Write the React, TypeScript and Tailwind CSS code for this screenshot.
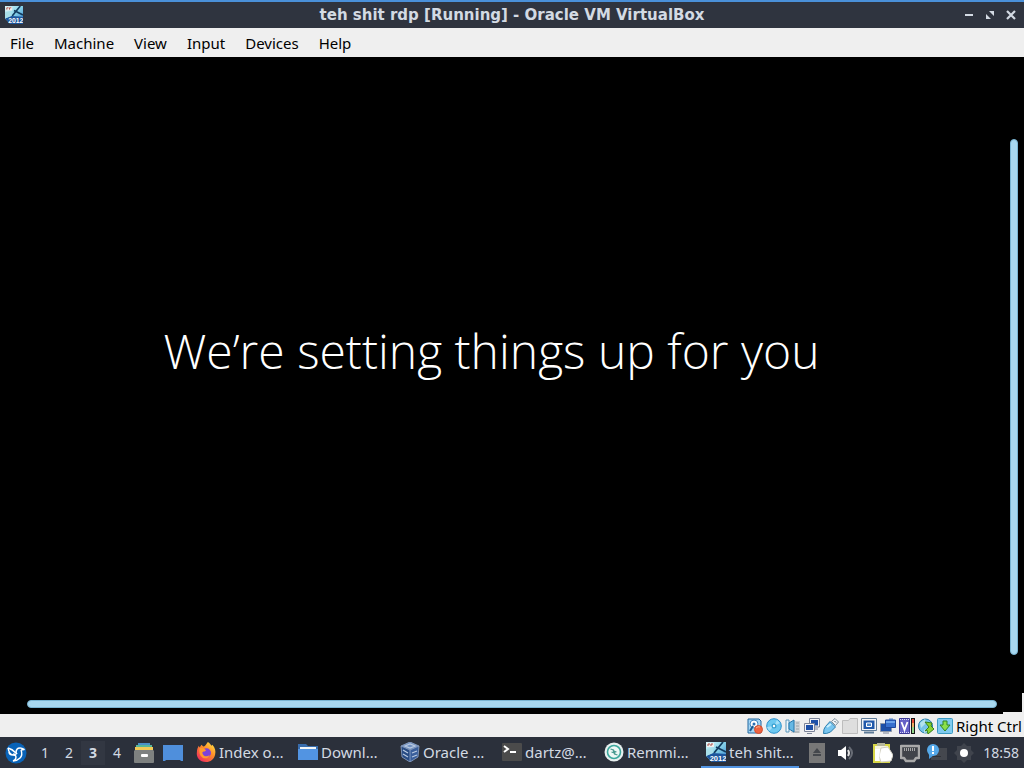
import React from "react";

type IconProps = { className?: string };

function ServerIcon({ className }: IconProps) {
  return (
    <svg viewBox="0 0 20 20" className={className} aria-hidden="true">
      <defs>
        <linearGradient id="server-bg" x1="0" y1="0" x2="1" y2="1">
          <stop offset="0" stopColor="#dff6f8" />
          <stop offset=".45" stopColor="#8ed7ea" />
          <stop offset="1" stopColor="#2a7fd0" />
        </linearGradient>
      </defs>
      <path d="M0 0h20v20H6L0 14z" fill="url(#server-bg)" />
      <path d="M8 11 17 0M10 5l10 5" stroke="#123c60" strokeWidth="1.8" />
      <path d="m0 14 7-3 13 1v8H6z" fill="#1d559c" />
      <path d="m0 7 7-1v5l-7 3z" fill="#a9dfe9" />
      <path d="M1 1h7v4H1z" fill="#f2f0ee" />
      <path d="M2 4V2h2M5 4V2h2" stroke="#a8504c" fill="none" />
      <text x="12" y="18.5" textAnchor="middle" fontSize="7.5" fontWeight="700" fill="#fff" fontFamily="Liberation Sans, sans-serif">2012</text>
    </svg>
  );
}

function LauncherIcon() {
  return (
    <svg viewBox="0 0 22 22" className="size-[22px]" aria-hidden="true">
      <circle cx="11" cy="11" r="10.5" fill="#0963b8" />
      <path d="M3 6q4 1 8 5" fill="none" stroke="#fff" strokeWidth="1.6" />
      <path d="M11 11q0-5 4-5 2 0 4 1.500l-3 .5" fill="none" stroke="#fff" strokeWidth="1.6" strokeLinejoin="round" />
      <path d="M16 8q2 5-1 8-3 3-7 3 3-1 3-4 0-2-3-2-4-1-5-7M4 10q0 3 4 3" fill="none" stroke="#fff" strokeWidth="1.4" />
      <path d="M8 12q3 1 4-1" fill="none" stroke="#fff" strokeWidth="1.6" />
    </svg>
  );
}

function CabinetIcon() {
  return (
    <svg viewBox="0 0 20 20" className="size-5" aria-hidden="true">
      <path d="M4 0h12v4H4z" fill="#4a90c8" />
      <path d="M2 2h16v3H2z" fill="#57b69b" />
      <path d="M1 4h18v4H1z" fill="#f1c957" />
      <path d="M1 7h18l1 1v11a1 1 0 0 1-1 1H1a1 1 0 0 1-1-1V8z" fill="#7e8180" />
      <rect x="7" y="11" width="7" height="3" rx="1" fill="#fff" />
    </svg>
  );
}

function DesktopIcon() {
  return (
    <svg viewBox="0 0 20 18" className="h-[18px] w-5" aria-hidden="true">
      <path d="M0 1h20v16h-2l-1-1H3l-1 1H0z" fill="#4f8fdc" />
    </svg>
  );
}

function FirefoxIcon({ className }: IconProps) {
  return (
    <svg viewBox="0 0 22 22" className={className} aria-hidden="true">
      <defs>
        <linearGradient id="fox" x1="1" y1="0" x2=".2" y2="1">
          <stop offset="0" stopColor="#fff04a" />
          <stop offset=".45" stopColor="#ff9128" />
          <stop offset="1" stopColor="#ef2a5e" />
        </linearGradient>
      </defs>
      <path d="M13 0c2 1 3 3 4 4l1-1c3 3 4 7 3 11-1 5-5 8-10 8C4 22 0 17 1 11c0-3 1-5 2-7l1 2 2-3 2 2c2 0 3-2 5-5z" fill="url(#fox)" />
      <circle cx="11.5" cy="12" r="5" fill="#7d42d9" />
      <path d="M4 7c3-1 5 0 7 2-1 2-4 1-4 3 1 4 5 5 8 2-1 4-5 5-8 3-3-2-4-6-3-10z" fill="#ff9a2c" />
    </svg>
  );
}

function FolderIcon({ className }: IconProps) {
  return (
    <svg viewBox="0 0 20 20" className={className} aria-hidden="true">
      <path d="M0 2h8l2 2h10v14H0z" fill="#386cac" />
      <path d="M2 5h16v4H2z" fill="#f2f5f7" />
      <path d="M0 7h20v11H0z" fill="#5294e2" />
    </svg>
  );
}

function CubeIcon({ className }: IconProps) {
  return (
    <svg viewBox="0 0 20 20" className={className} aria-hidden="true">
      <path d="m1 4 9-4 9 4-9 4z" fill="#6f8fc0" />
      <path d="m1 4 9 4v12l-8-5z" fill="#284b83" />
      <path d="m19 4-9 4v12l8-5z" fill="#3a5f9c" />
      <path d="m1 4 9 4 9-4M10 8v12M1 4l1 11 8 5 8-5 1-11-9-4z" fill="none" stroke="#8fa5c8" strokeWidth=".8" />
      <path d="m5 4 5-2 5 2-5 2zM12 11l5-2M12 15l5-2M3 8l5 3M3 12l5 3" fill="none" stroke="#b9c9e0" strokeWidth="1.3" />
    </svg>
  );
}

function TerminalIcon({ className }: IconProps) {
  return (
    <svg viewBox="0 0 20 20" className={className} aria-hidden="true">
      <rect y="1" width="20" height="18" rx="1" fill="#4b4b4b" />
      <path d="m2 4 4 3-4 3M8 10h6" fill="none" stroke="#fff" strokeWidth="2" />
    </svg>
  );
}

function RemminaIcon({ className }: IconProps) {
  return (
    <svg viewBox="0 0 20 20" className={className} aria-hidden="true">
      <circle cx="10" cy="10" r="9.5" fill="#e7efef" />
      <circle cx="10" cy="10" r="6.5" fill="#eef7f5" stroke="#3ba79c" strokeWidth="1.6" />
      <path d="m6.500 7 3 1 1 3-3-1M13.500 13l-3-1-1-3 3 1" fill="none" stroke="#4a9a90" strokeWidth="1.300" />
    </svg>
  );
}

const deviceIcons: { name: string; art: React.ReactNode }[] = [
  {
    name: "Hard disks",
    art: (
      <>
        <path d="M1 1h11l2 2v12H1z" fill="#a5d6f5" stroke="#20669f" />
        <circle cx="7" cy="6" r="4" fill="#fff" stroke="#4186c2" />
        <circle cx="7" cy="6" r="1.5" fill="#276cb3" />
        <path d="M3 13 6 8" stroke="#175990" strokeWidth="2" />
        <circle cx="11.500" cy="11.500" r="4" fill="#ee6240" stroke="#d14f30" />
        <path d="M9 10q2-2 4-1" stroke="#ffad87" fill="none" />
      </>
    ),
  },
  {
    name: "Optical drives",
    art: (
      <>
        <circle cx="8" cy="8" r="7.300" fill="#6cc8f0" stroke="#2a90cc" />
        <path d="m8 8 3-6 3 3zM8 8l-5 5-2-4z" fill="#a5e0f8" />
        <circle cx="8" cy="8" r="2.500" fill="#399fce" />
        <circle cx="8" cy="8" r="1.200" fill="#fff" />
      </>
    ),
  },
  {
    name: "Audio",
    art: (
      <>
        <path d="M8 3h7v12H6v-2h3z" fill="#d1d5d8" />
        <path d="M11 5h3M11 8h3M11 11h3M8 14h6" stroke="#9ba3a8" />
        <path d="M1 2h3v12H1z" fill="#eef6fb" stroke="#5997bd" />
        <path d="m4 5 5-3v12l-5-3z" fill="#66b8e4" stroke="#2779ad" />
      </>
    ),
  },
  {
    name: "Network",
    art: (
      <>
        <path d="M5.500.5h10v8.500h-10z" fill="#f4f4f8" stroke="#7c8498" />
        <path d="M7 2h7v5.500H7z" fill="#1c4fa8" />
        <path d="M8 11h6" stroke="#7c8498" />
        <path d="M.5 5.500h10v8H.5z" fill="#f4f4f8" stroke="#7c8498" />
        <path d="M2 7h7v5H2z" fill="#1c4fa8" />
        <path d="M3 15.500h5" stroke="#7c8498" />
      </>
    ),
  },
  {
    name: "USB",
    art: (
      <>
        <path d="m9 3 3-2.500 3.500 3.500-3 3.500-4-4z" fill="#f3f6f8" stroke="#7c8d99" />
        <path d="m7 3.500 5.500 5.500-5 5q-4 2-7 1.500 0-5 2-7z" fill="#79c6f0" stroke="#2b7dad" />
        <path d="m4 9 4-3" stroke="#c8effd" strokeWidth="2" />
        <path d="m11.500 3 1.500 1.500" stroke="#425d70" />
      </>
    ),
  },
  {
    name: "Shared folders",
    art: <path d="M.5 2.500h6l1.500-2h7.500v15H.5z" fill="#dedede" stroke="#bdbdbd" />,
  },
  {
    name: "Display",
    art: (
      <>
        <path d="M.5.5h15v12H.5z" fill="#f3f5f7" stroke="#5e7b98" />
        <path d="M3 14.500h10" stroke="#5e7b98" strokeWidth="2" />
        <path d="M2.500 2.500h11v8.500h-11z" fill="#1f58aa" />
        <path d="M5.500 5h5v3.500h-5z" fill="#4b83c6" stroke="#fff" />
      </>
    ),
  },
  {
    name: "Recording",
    art: (
      <>
        <path d="M.5 5.500h11v8H.5z" fill="#1c4fa8" stroke="#8c97a8" />
        <path d="M3 15h6" stroke="#7c8498" />
        <path d="M5.500 2h10v7.500h-10z" fill="#3770ce" stroke="#1d479b" />
        <path d="M9 .5h4V2H9z" fill="#507fc6" />
        <path d="M6 4h9" stroke="#6ba3ea" strokeWidth="2" />
      </>
    ),
  },
  {
    name: "Features",
    art: (
      <>
        <path d="M.5.5h10v15H.5z" fill="#6460c6" stroke="#3d3a96" />
        <path d="m2.500 4 3 8 3-8" stroke="#fff" strokeWidth="1.800" fill="none" />
        <path d="M1 1.500h9M1 14.500h9" stroke="#d9d8fa" strokeDasharray="1 1" />
        <path d="M12 0h4v16h-4z" fill="#151515" />
        <path d="M13 1h2v5h-2z" fill="#e54b38" />
        <path d="M13 5h2v5h-2z" fill="#edae65" />
        <path d="M13 9h2v6h-2z" fill="#92d68a" />
      </>
    ),
  },
  {
    name: "Mouse integration",
    art: (
      <>
        <circle cx="7.500" cy="8" r="7" fill="#76c3ea" stroke="#287fab" />
        <path d="m2 5 5-4 1 4-5 5zM6 11l4 3-4 1z" fill="#b3e2ee" />
        <path d="m7 4 7 1-1 3 3 3-6 5-1-4-2 1 4-4z" fill="#87d332" stroke="#38801c" />
      </>
    ),
  },
  {
    name: "Keyboard capture",
    art: (
      <>
        <rect x=".5" y=".5" width="15" height="15" rx="1" fill="#80cbf0" stroke="#3c9bc4" />
        <path d="M6 3h4v4h3l-5 6-5-6h3z" fill="#8be04a" stroke="#2f8726" />
      </>
    ),
  },
];

const menus = ["File", "Machine", "View", "Input", "Devices", "Help"];

const tasks = [
  { label: "Index o…", Icon: FirefoxIcon },
  { label: "Downl…", Icon: FolderIcon },
  { label: "Oracle …", Icon: CubeIcon },
  { label: "dartz@…", Icon: TerminalIcon },
  { label: "Remmi…", Icon: RemminaIcon },
  { label: "teh shit…", Icon: ServerIcon, active: true },
];

function TitleBar() {
  return (
    <header className="grid h-7 shrink-0 grid-cols-[80px_1fr_80px] items-center border-t-2 border-[#4a90d9] bg-[#2f343f] text-[#d3dae3]">
      <ServerIcon className="ml-[5px] size-[18px]" />
      <h1 className="truncate text-center font-['DejaVu_Sans',sans-serif] text-[15px] leading-5 font-bold">
        teh shit rdp [Running] - Oracle VM VirtualBox
      </h1>
      <div className="flex justify-end gap-[5px] pr-[5px]">
        <button aria-label="Minimize" className="flex size-4 items-center justify-center">
          <svg viewBox="0 0 16 16" className="size-4"><path d="M4 7h8v2H4z" fill="currentColor" /></svg>
        </button>
        <button aria-label="Maximize" className="flex size-4 items-center justify-center">
          <svg viewBox="0 0 16 16" className="size-4"><path d="M7 4h5v5zM4 7v5h5z" fill="currentColor" /></svg>
        </button>
        <button aria-label="Close" className="flex size-4 items-center justify-center">
          <svg viewBox="0 0 16 16" className="size-4"><path d="m4 4 8 8M12 4l-8 8" stroke="currentColor" strokeWidth="2.2" /></svg>
        </button>
      </div>
    </header>
  );
}

function GuestView() {
  return (
    <main id="guest" className="flex min-h-0 flex-1 flex-col bg-black">
      <div className="flex min-h-0 flex-1">
        <div className="flex flex-1 items-center justify-center pr-5 pb-12">
          <p className="font-['Open_Sans',sans-serif] text-5xl font-light whitespace-nowrap text-white">
            We’re setting things up for you
          </p>
        </div>
        <div className="flex w-[21px] flex-col pt-[82px] pr-[6px] pb-[38px] pl-[7px]">
          <div role="scrollbar" aria-label="Vertical scroll" aria-orientation="vertical" aria-controls="guest" aria-valuenow={100} className="flex-1 rounded-full border border-[#79b4d2] bg-[#a8d8f0]" />
        </div>
      </div>
      <div className="flex h-[21px] shrink-0">
        <div className="flex flex-1 items-start pt-[7px] pr-[6px] pl-[27px]">
          <div role="scrollbar" aria-label="Horizontal scroll" aria-orientation="horizontal" aria-controls="guest" aria-valuenow={100} className="h-2 flex-1 rounded-full border border-[#79b4d2] bg-[#a8d8f0]" />
        </div>
        <div className="w-[21px] border-r-2 border-b-2 border-[#efefef]" />
      </div>
    </main>
  );
}

function StatusBar() {
  return (
    <div className="flex h-[23px] shrink-0 items-center justify-end gap-[3px] bg-[#efefef] pr-[2px]">
      {deviceIcons.map(({ name, art }) => (
        <button key={name} aria-label={name} className="size-4">
          <svg viewBox="0 0 16 16" className="size-4">{art}</svg>
        </button>
      ))}
      <span className="text-[15px] leading-5 text-black">Right Ctrl</span>
    </div>
  );
}

function Tray() {
  return (
    <div className="flex shrink-0 items-center">
      <button aria-label="Removable media" className="mr-3">
        <svg viewBox="0 0 16 20" className="h-5 w-4"><path d="M0 0h16v20H0z" fill="#777" /><path d="m8 5 4 5H4zM4 11h8v2H4z" fill="#44474c" /></svg>
      </button>
      <button aria-label="Volume" className="mr-[18px]">
        <svg viewBox="0 0 18 18" className="size-[18px]">
          <path d="M1 6h3l5-4v14l-5-4H1z" fill="#fff" />
          <path d="M11 6q2 3 0 6" fill="none" stroke="#e2e2e2" strokeWidth="2" />
          <path d="M12 3q6 6 0 12" fill="none" stroke="#686c75" strokeWidth="2" />
        </svg>
      </button>
      <button aria-label="Clipboard" className="mr-[7px]">
        <svg viewBox="0 0 20 20" className="size-5">
          <path d="M0 1h17v19H0z" fill="#d8d646" /><path d="M2 3h13v15H2z" fill="#f7f5df" />
          <path d="M4 0h8v3H4z" fill="#b6b69c" />
          <path d="m8 5 7-1 5 8-2 6-10 1-2-6z" fill="#fff" stroke="#d2d0c4" />
          <path d="M2 6h5l-1 12H2z" fill="#fff" />
        </svg>
      </button>
      <button aria-label="Network connection" className="mr-[7px]">
        <svg viewBox="0 0 20 20" className="size-5">
          <path d="M1 3h18v12h-3l-2 3H6l-2-3H1z" fill="#41444a" stroke="#a9a9a9" strokeWidth="2.400" strokeLinejoin="round" />
          <path d="M4.500 5v3M6.500 5v3M8.500 5v3M10.500 5v3M12.500 5v3M14.500 5v3" stroke="#a7a7a7" />
        </svg>
      </button>
      <button aria-label="Notifications" className="mr-[7px]">
        <svg viewBox="0 0 20 20" className="size-5">
          <path d="M4 5h16v12H4z" fill="#44474e" />
          <path d="M5 13h9v1H5z" fill="#303238" />
          <path d="m2 10 0 6 5-4z" fill="#4a9de0" />
          <circle cx="6" cy="7" r="6" fill="#56a9e9" /><path d="M6 3v5M6 9v2" stroke="#fff" strokeWidth="2" />
        </svg>
      </button>
      <button aria-label="Brightness" className="mr-[9px]">
        <svg viewBox="0 0 20 20" className="size-5">
          <path d="m10 0 3 3h4v4l3 3-3 3v4h-4l-3 3-3-3H3v-4l-3-3 3-3V3h4z" fill="#40444d" />
          <circle cx="10" cy="10" r="4" fill="#fff" />
        </svg>
      </button>
      <time dateTime="18:58" className="text-sm">18:58</time>
    </div>
  );
}

function Taskbar() {
  return (
    <footer className="flex h-[31px] shrink-0 items-center bg-[#2b303b] pr-[5px] pl-[5px] text-[#d3dae3]">
      <button aria-label="Applications" className="mr-[6px] shrink-0"><LauncherIcon /></button>
      <nav aria-label="Workspaces" className="flex shrink-0">
        {[1, 2, 3, 4].map((n) => (
          <button key={n} aria-current={n === 3} className={n === 3 ? "h-6 w-6 bg-[#323742] text-sm font-bold" : "h-6 w-6 text-sm"}>{n}</button>
        ))}
      </nav>
      <button aria-label="File manager" className="ml-[5px] shrink-0"><CabinetIcon /></button>
      <button aria-label="Show desktop" className="ml-[9px] shrink-0"><DesktopIcon /></button>
      <nav aria-label="Windows" className="ml-2 flex h-full min-w-0 flex-1 gap-1">
        {tasks.map(({ label, Icon, active }) => (
          <button
            key={label}
            aria-pressed={!!active}
            className={
              active
                ? "flex w-[98px] items-center gap-[3px] border-b-2 border-[#5294e2] pl-[5px] text-[15px] leading-5 whitespace-nowrap"
                : "flex w-[98px] items-center gap-[3px] border-b-2 border-transparent pl-[5px] text-[15px] leading-5 whitespace-nowrap"
            }
          >
            <Icon className="size-5 shrink-0" />
            {label}
          </button>
        ))}
      </nav>
      <Tray />
    </footer>
  );
}

export default function App() {
  return (
    <div className="flex h-screen flex-col overflow-hidden font-['Noto_Sans',sans-serif]">
      <TitleBar />
      <nav aria-label="Menu" className="flex h-[29px] shrink-0 items-center gap-5 bg-[#efefef] px-[10px] text-[15px] leading-5 text-black">
        {menus.map((m) => (
          <button key={m}>{m}</button>
        ))}
      </nav>
      <GuestView />
      <StatusBar />
      <Taskbar />
    </div>
  );
}
